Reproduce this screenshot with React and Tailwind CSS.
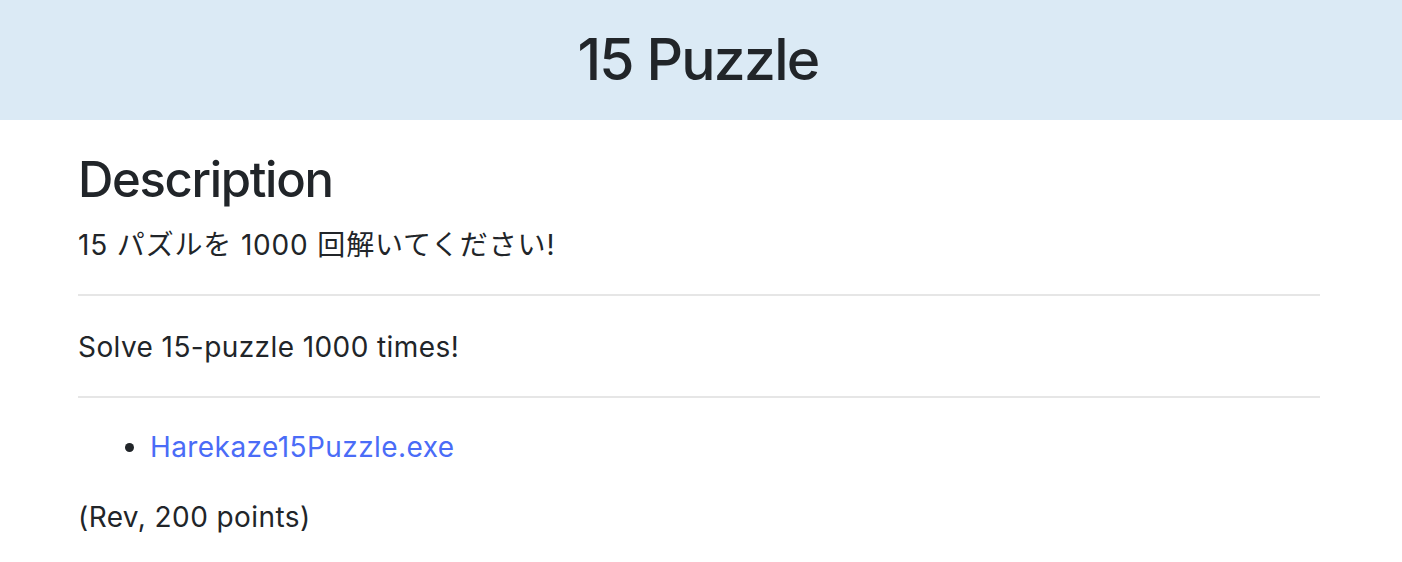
import React from 'react';

const App = () => {
    return (
        <div className="min-h-[562px] bg-white text-[#212529] font-['Inter','Noto_Sans_CJK_JP',sans-serif] text-[28px] leading-[1.5] tracking-[0.015em]">
            <header className="h-[120px] bg-[#dbeaf5] flex items-center justify-center">
                <h1 className="text-[57px] leading-[1.2] font-medium tracking-[-0.03em] pr-[6px]">15 Puzzle</h1>
            </header>
            <main className="w-[1242px] ml-[78px] pt-[31px]">
                <h3 className="text-[49px] leading-[1.2] font-medium mb-[14px] tracking-[-0.027em]">Description</h3>
                <p className="mb-[28px] tracking-[0.03em]">15 パズルを 1000 回解いてください!</p>
                <hr className="border-0 border-t-2 border-[#e6e6e6] mb-[30px]" />
                <p className="mb-[28px]">Solve 15-puzzle 1000 times!</p>
                <hr className="border-0 border-t-2 border-[#e6e6e6] mb-[28px]" />
                <ul className="list-disc pl-[72px] mb-[28px]">
                    <li>
                        <a href="#" className="text-[#4a6cf7]">Harekaze15Puzzle.exe</a>
                    </li>
                </ul>
                <p>(Rev, 200 points)</p>
            </main>
        </div>
    );
};

export default App;
